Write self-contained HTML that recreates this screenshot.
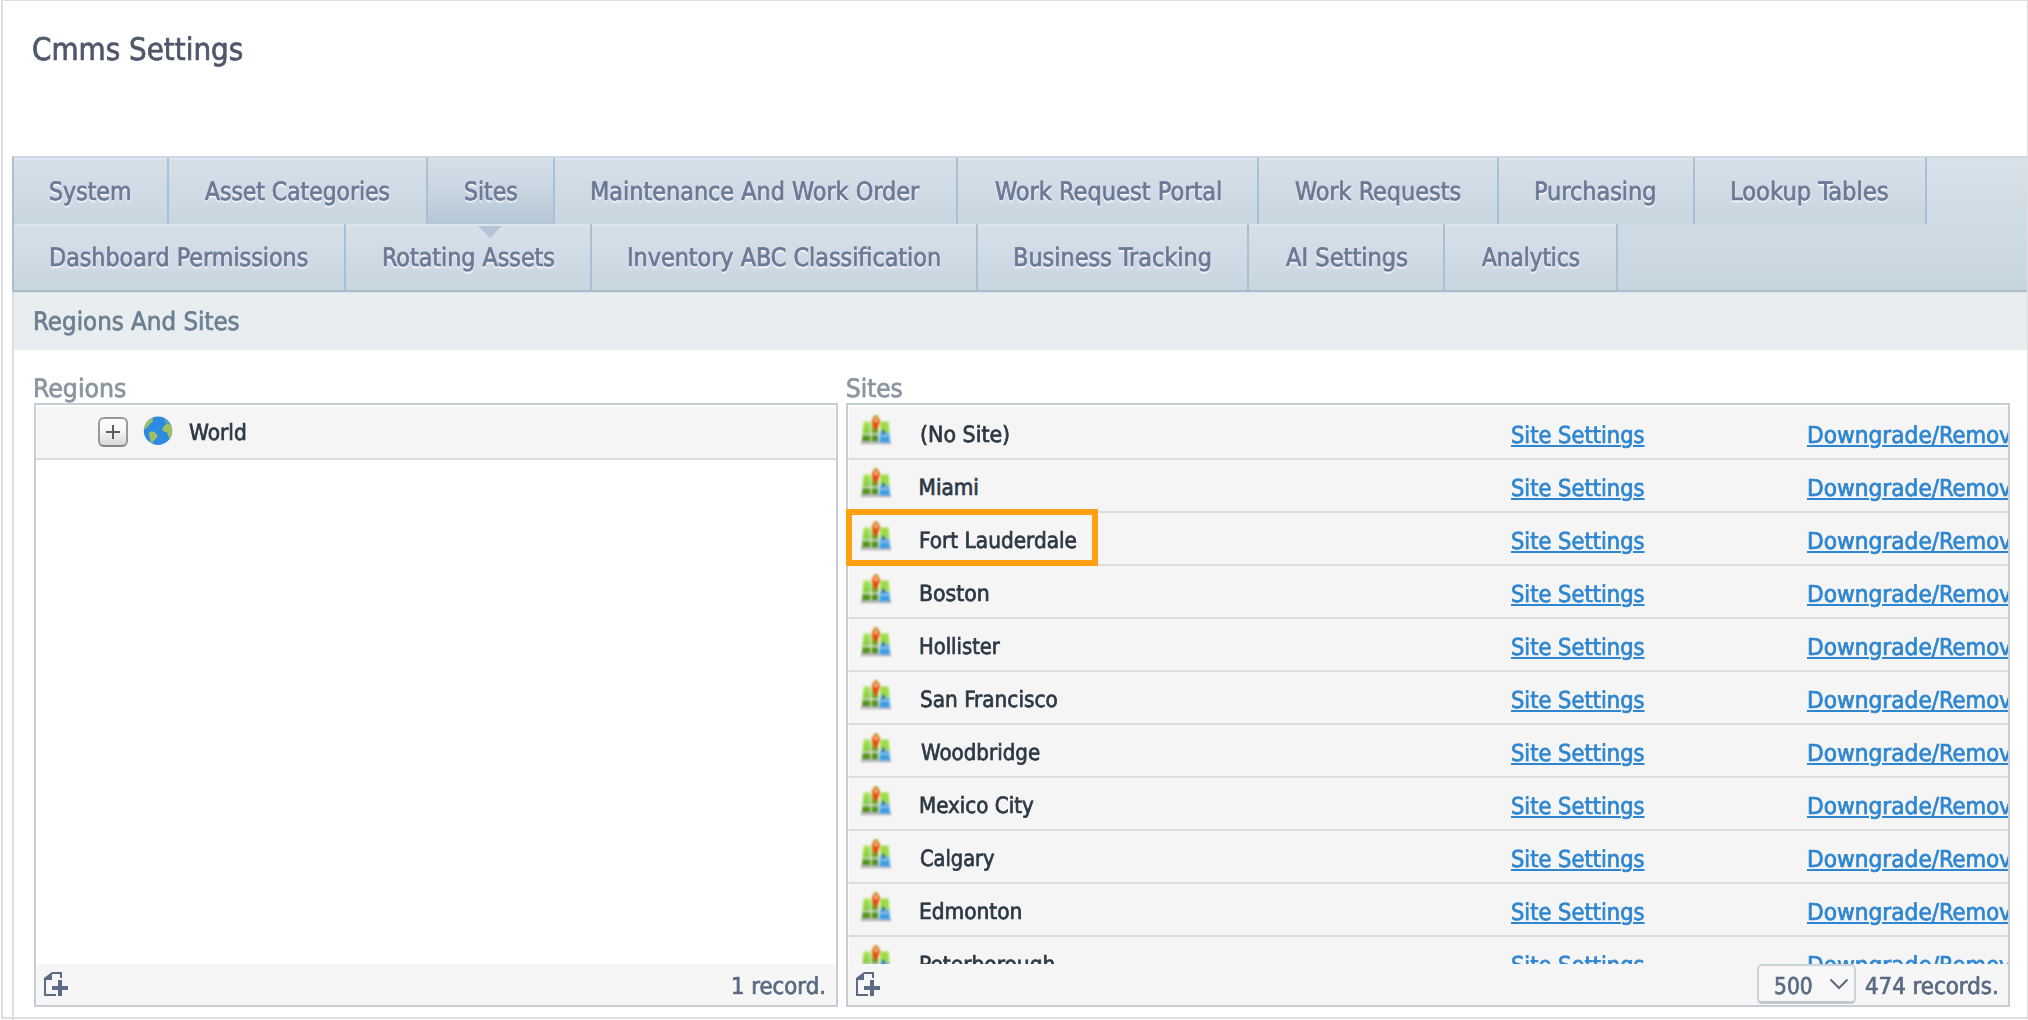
<!DOCTYPE html><html><head><meta charset="utf-8"><title>Cmms Settings</title><style>
html,body{margin:0;padding:0;background:#fff;}
body{width:2028px;height:1020px;overflow:hidden;position:relative;font-family:"DejaVu Sans Condensed","DejaVu Sans","Liberation Sans",sans-serif;font-stretch:condensed;}
.a{position:absolute;}
.t{position:absolute;white-space:nowrap;line-height:1;transform-origin:0 0;text-rendering:geometricPrecision;-webkit-text-stroke:0.7px currentColor;}
#outer{left:1px;top:-1px;width:2024px;height:1016px;border:2px solid #dedede;z-index:5;pointer-events:none;}
#vline{left:12px;top:156px;width:2px;height:900px;background:#dedede;}
#tabs{left:12px;top:156px;width:2013px;height:132px;border-left:2px solid #a9bfd3;border-top:2px solid #ced8e2;border-bottom:2px solid #a9bdce;background:linear-gradient(#d7e1ea,#c7d5df);}
.tab{position:absolute;height:66px;box-sizing:border-box;border-right:2px solid #a9bfd3;background:linear-gradient(#d6e0e9,#c8d6e0);box-shadow:inset 0 2px 0 rgba(255,255,255,.18);}
.tab.sel{background:linear-gradient(#d4dee8 0%,#cad7e2 45%,#b5c6d6 100%);box-shadow:inset 0 2px 0 rgba(255,255,255,.12);}
.tt{color:#6b7896;text-shadow:0 2px 2px #fff,0 1px 1px rgba(255,255,255,.4);}
#tri{left:478px;top:226px;width:0;height:0;border-left:12px solid transparent;border-right:12px solid transparent;border-top:12px solid #b4c5d6;}
#band{left:14px;top:292px;width:2013px;height:57px;background:#e8edf0;border-top:1px solid #dfe1e3;}
.panel{position:absolute;box-sizing:border-box;border:2px solid #c7ccd5;background:#fff;overflow:hidden;}
.row{position:absolute;left:0;right:0;height:51px;background:#f5f5f5;border-bottom:2px solid #dcdcdc;}
.nm{color:#2c3845;}
#psit .row::before{content:"";position:absolute;left:0;top:0;width:1px;height:51px;background:#fff;}
#preg .row::before{content:"";position:absolute;left:0;top:0;width:1px;height:51px;background:#fff;}
#preg .row::after{content:"";position:absolute;right:0;top:0;width:1px;height:51px;background:#fff;}
.lk{color:#2e86d1;text-decoration:underline;text-decoration-thickness:2px;text-underline-offset:2px;}
.foot{position:absolute;left:0;right:0;bottom:0;height:41px;background:#f6f6f6;}
.ft{color:#5a6a83;text-shadow:0 2px 0 #fff;}
</style></head><body>
<div id="outer" class="a"></div>
<div id="vline" class="a"></div>
<div class="t " style="left:31.5px;top:35px;font-size:31.04px;transform:scaleX(0.9971);color:#4f576b;">Cmms Settings</div>
<div id="tabs" class="a">
<div class="tab" style="left:0px;top:0;width:155px"></div>
<div class="tab" style="left:155px;top:0;width:259px"></div>
<div class="tab sel" style="left:414px;top:0;width:127px"></div>
<div class="tab" style="left:541px;top:0;width:403px"></div>
<div class="tab" style="left:944px;top:0;width:301px"></div>
<div class="tab" style="left:1245px;top:0;width:240px"></div>
<div class="tab" style="left:1485px;top:0;width:196px"></div>
<div class="tab" style="left:1681px;top:0;width:232px"></div>
<div class="tab" style="left:0px;top:66px;width:332px"></div>
<div class="tab" style="left:332px;top:66px;width:246px"></div>
<div class="tab" style="left:578px;top:66px;width:386px"></div>
<div class="tab" style="left:964px;top:66px;width:271px"></div>
<div class="tab" style="left:1235px;top:66px;width:196px"></div>
<div class="tab" style="left:1431px;top:66px;width:173px"></div>
</div>
<div class="t tt" style="left:49.0px;top:179px;font-size:25.22px;transform:scaleX(0.9756);">System</div>
<div class="t tt" style="left:205.0px;top:179px;font-size:25.22px;transform:scaleX(0.9660);">Asset Categories</div>
<div class="t tt" style="left:463.9px;top:179px;font-size:25.22px;transform:scaleX(0.9685);">Sites</div>
<div class="t tt" style="left:590.0px;top:179px;font-size:25.22px;transform:scaleX(0.9864);">Maintenance And Work Order</div>
<div class="t tt" style="left:994.5px;top:179px;font-size:25.22px;transform:scaleX(0.9934);">Work Request Portal</div>
<div class="t tt" style="left:1295.0px;top:179px;font-size:25.22px;transform:scaleX(0.9866);">Work Requests</div>
<div class="t tt" style="left:1534.0px;top:179px;font-size:25.22px;transform:scaleX(0.9876);">Purchasing</div>
<div class="t tt" style="left:1729.7px;top:179px;font-size:25.22px;transform:scaleX(1.0016);">Lookup Tables</div>
<div class="t tt" style="left:49.3px;top:245px;font-size:25.22px;transform:scaleX(0.9809);">Dashboard Permissions</div>
<div class="t tt" style="left:381.7px;top:245px;font-size:25.22px;transform:scaleX(0.9805);">Rotating Assets</div>
<div class="t tt" style="left:626.8px;top:245px;font-size:25.22px;transform:scaleX(0.9834);">Inventory ABC Classification</div>
<div class="t tt" style="left:1013.0px;top:245px;font-size:25.22px;transform:scaleX(0.9886);">Business Tracking</div>
<div class="t tt" style="left:1285.5px;top:245px;font-size:25.22px;transform:scaleX(0.9959);">AI Settings</div>
<div class="t tt" style="left:1482.0px;top:245px;font-size:25.22px;transform:scaleX(0.9510);">Analytics</div>
<div id="tri" class="a"></div>
<div id="band" class="a"></div>
<div class="t " style="left:32.8px;top:309px;font-size:25.22px;transform:scaleX(1.0154);color:#6a7f92;">Regions And Sites</div>
<div class="t " style="left:32.7px;top:376px;font-size:25.22px;transform:scaleX(1.0448);color:#8a95a0;">Regions</div>
<div class="t " style="left:845.5px;top:376px;font-size:25.22px;transform:scaleX(1.0241);color:#8a95a0;">Sites</div>
<svg width="0" height="0" style="position:absolute"><defs><linearGradient id="g1" x1="0" y1="0" x2="0" y2="1"><stop offset="0" stop-color="#a9e858"/><stop offset=".55" stop-color="#88cc3c"/><stop offset=".7" stop-color="#5f9f22"/><stop offset="1" stop-color="#4a8a14"/></linearGradient><linearGradient id="g3" x1="0" y1="0" x2="0" y2="1"><stop offset="0" stop-color="#7cbc34"/><stop offset="1" stop-color="#4c8a16"/></linearGradient><linearGradient id="g2" x1="0" y1="0" x2="0" y2="1"><stop offset="0" stop-color="#c0a444"/><stop offset=".17" stop-color="#d49c3a"/><stop offset=".3" stop-color="#e87828"/><stop offset=".55" stop-color="#f04c0c"/><stop offset="1" stop-color="#e43800"/></linearGradient><filter id="bl" x="-10%" y="-10%" width="120%" height="120%"><feGaussianBlur stdDeviation=".9"/></filter></defs></svg>
<div class="panel" id="preg" style="left:34px;top:403px;width:804px;height:604px;">
<div class="row" style="top:2px"></div>
<div class="a" id="plus" style="left:62px;top:12px;width:30px;height:30px;box-sizing:border-box;border:2px solid #999;border-bottom-color:#858585;border-radius:6px;background:linear-gradient(#ffffff,#f4f4f4 50%,#d9d9d9);"><div class="a" style="left:6px;top:12px;width:14px;height:2px;background:#5e5e5e"></div><div class="a" style="left:12px;top:6px;width:2px;height:14px;background:#5e5e5e"></div></div>
<svg class="a" id="globe" style="left:107px;top:11px" width="30" height="30" viewBox="0 0 30 30"><defs><clipPath id="gc"><circle cx="15" cy="14.800" r="14.200"/></clipPath><filter id="bl2" x="-10%" y="-10%" width="120%" height="120%"><feGaussianBlur stdDeviation=".75"/></filter></defs><g filter="url(#bl2)"><circle cx="15" cy="14.800" r="14.200" fill="#2f8ae0"/><g clip-path="url(#gc)" fill="#9dc162"><path d="M0 12.500L2.800 6.800 6.800 2.800 9.500 1.500 10 5.200 6.800 8 4.800 10.700 1.700 13.400z"/><path d="M6.400 15.800L10.700 15.400 14.600 19.300 13.800 21.700 10.700 24.800 9.500 27 7.500 26 7.200 22.500 6 19.300z"/><path d="M19.300 13.400L20.900 9.900 23.200 8 26.400 8 30 12 30 18.500 26 22.500 24.800 18.500 24 16.200 20.500 15.400z"/><path d="M20.500 2.500L25 5.500 26.400 7.600 23 7.800z" opacity=".55"/></g></g></svg>
<div class="t nm" style="left:152.5px;top:17px;font-size:22.31px;transform:scaleX(1.0071);">World</div>
<div class="foot"></div>
<div class="t ft" style="left:695.0px;top:570px;font-size:23.28px;transform:scaleX(1.0167);">1 record.</div>
</div>
<div class="panel" id="psit" style="left:846px;top:403px;width:1164px;height:604px;background:#f5f5f5">
<div class="a" style="left:0;right:0;top:0;height:2px;background:#fff"></div>
<div class="row" style="top:2px;right:0"><svg class="a" style="left:12px;top:7px" width="32" height="32" viewBox="0 0 32 32"><g filter="url(#bl)"><rect x=".5" y="27.300" width="31" height="3" fill="#bdbdbd"/><path d="M3.600 7.600H10.400V27.600H1.900z" fill="url(#g1)"/><rect x="11.600" y="9" width="6.600" height="18.600" fill="url(#g3)"/><path d="M20.300 7.600H28.600L29.400 19.200H20z" fill="#9cdc46"/><path d="M19.600 19H29.400L30.100 28.800H19.500z" fill="#3c9ee4"/><rect x="19.800" y="21" width="10" height="1.400" fill="#bfe0f6" opacity=".7"/><rect x="21.900" y="15.800" width="3.100" height="3.600" fill="#3356b8"/><rect x="2.500" y="19.400" width="16.500" height="1.500" fill="#e4ecd8" opacity=".85"/><path d="M14.200.9H17.600C17.800 2.600 18.200 3.200 19.200 4.200 20 5.200 20.200 6.400 20 7.600 19.400 10.800 17.400 14.200 15.900 17 15.700 17.300 15.500 17.300 15.300 17 13.800 14.200 12.200 10.800 11.800 7.600 11.600 6.400 11.800 5.200 12.600 4.200 13.600 3.200 14 2.600 14.200.9z" fill="url(#g2)"/><rect x="14.800" y="5.400" width="2.200" height="2.200" fill="#f8d0b0"/></g></svg></div>
<div class="t nm" style="left:71.6px;top:19px;font-size:22.31px;transform:scaleX(1.0267);">(No Site)</div>
<a class="t lk" style="left:663.0px;top:19px;font-size:23.28px;transform:scaleX(1.0061);">Site Settings</a>
<a class="t lk" style="left:959.1px;top:19px;font-size:23.28px;transform:scaleX(1.0381);">Downgrade/</a>
<a class="t lk" style="left:1091.0px;top:19px;font-size:23.28px;transform:scaleX(1.0088);">Remove</a>
<div class="row" style="top:55px;right:0"><svg class="a" style="left:12px;top:7px" width="32" height="32" viewBox="0 0 32 32"><g filter="url(#bl)"><rect x=".5" y="27.300" width="31" height="3" fill="#bdbdbd"/><path d="M3.600 7.600H10.400V27.600H1.900z" fill="url(#g1)"/><rect x="11.600" y="9" width="6.600" height="18.600" fill="url(#g3)"/><path d="M20.300 7.600H28.600L29.400 19.200H20z" fill="#9cdc46"/><path d="M19.600 19H29.400L30.100 28.800H19.500z" fill="#3c9ee4"/><rect x="19.800" y="21" width="10" height="1.400" fill="#bfe0f6" opacity=".7"/><rect x="21.900" y="15.800" width="3.100" height="3.600" fill="#3356b8"/><rect x="2.500" y="19.400" width="16.500" height="1.500" fill="#e4ecd8" opacity=".85"/><path d="M14.200.9H17.600C17.800 2.600 18.200 3.200 19.200 4.200 20 5.200 20.200 6.400 20 7.600 19.400 10.800 17.400 14.200 15.900 17 15.700 17.300 15.500 17.300 15.300 17 13.800 14.200 12.200 10.800 11.800 7.600 11.600 6.400 11.800 5.200 12.600 4.200 13.600 3.200 14 2.600 14.200.9z" fill="url(#g2)"/><rect x="14.800" y="5.400" width="2.200" height="2.200" fill="#f8d0b0"/></g></svg></div>
<div class="t nm" style="left:70.6px;top:72px;font-size:22.31px;transform:scaleX(1.0000);">Miami</div>
<a class="t lk" style="left:663.0px;top:72px;font-size:23.28px;transform:scaleX(1.0061);">Site Settings</a>
<a class="t lk" style="left:959.1px;top:72px;font-size:23.28px;transform:scaleX(1.0381);">Downgrade/</a>
<a class="t lk" style="left:1091.0px;top:72px;font-size:23.28px;transform:scaleX(1.0088);">Remove</a>
<div class="row" style="top:108px;right:0"><svg class="a" style="left:12px;top:7px" width="32" height="32" viewBox="0 0 32 32"><g filter="url(#bl)"><rect x=".5" y="27.300" width="31" height="3" fill="#bdbdbd"/><path d="M3.600 7.600H10.400V27.600H1.900z" fill="url(#g1)"/><rect x="11.600" y="9" width="6.600" height="18.600" fill="url(#g3)"/><path d="M20.300 7.600H28.600L29.400 19.200H20z" fill="#9cdc46"/><path d="M19.600 19H29.400L30.100 28.800H19.500z" fill="#3c9ee4"/><rect x="19.800" y="21" width="10" height="1.400" fill="#bfe0f6" opacity=".7"/><rect x="21.900" y="15.800" width="3.100" height="3.600" fill="#3356b8"/><rect x="2.500" y="19.400" width="16.500" height="1.500" fill="#e4ecd8" opacity=".85"/><path d="M14.200.9H17.600C17.800 2.600 18.200 3.200 19.200 4.200 20 5.200 20.200 6.400 20 7.600 19.400 10.800 17.400 14.200 15.900 17 15.700 17.300 15.500 17.300 15.300 17 13.800 14.200 12.200 10.800 11.800 7.600 11.600 6.400 11.800 5.200 12.600 4.200 13.600 3.200 14 2.600 14.200.9z" fill="url(#g2)"/><rect x="14.800" y="5.400" width="2.200" height="2.200" fill="#f8d0b0"/></g></svg></div>
<div class="t nm" style="left:70.6px;top:125px;font-size:22.31px;transform:scaleX(1.0026);">Fort Lauderdale</div>
<a class="t lk" style="left:663.0px;top:125px;font-size:23.28px;transform:scaleX(1.0061);">Site Settings</a>
<a class="t lk" style="left:959.1px;top:125px;font-size:23.28px;transform:scaleX(1.0381);">Downgrade/</a>
<a class="t lk" style="left:1091.0px;top:125px;font-size:23.28px;transform:scaleX(1.0088);">Remove</a>
<div class="row" style="top:161px;right:0"><svg class="a" style="left:12px;top:7px" width="32" height="32" viewBox="0 0 32 32"><g filter="url(#bl)"><rect x=".5" y="27.300" width="31" height="3" fill="#bdbdbd"/><path d="M3.600 7.600H10.400V27.600H1.900z" fill="url(#g1)"/><rect x="11.600" y="9" width="6.600" height="18.600" fill="url(#g3)"/><path d="M20.300 7.600H28.600L29.400 19.200H20z" fill="#9cdc46"/><path d="M19.600 19H29.400L30.100 28.800H19.500z" fill="#3c9ee4"/><rect x="19.800" y="21" width="10" height="1.400" fill="#bfe0f6" opacity=".7"/><rect x="21.900" y="15.800" width="3.100" height="3.600" fill="#3356b8"/><rect x="2.500" y="19.400" width="16.500" height="1.500" fill="#e4ecd8" opacity=".85"/><path d="M14.200.9H17.600C17.800 2.600 18.200 3.200 19.200 4.200 20 5.200 20.200 6.400 20 7.600 19.400 10.800 17.400 14.200 15.900 17 15.700 17.300 15.500 17.300 15.300 17 13.800 14.200 12.200 10.800 11.800 7.600 11.600 6.400 11.800 5.200 12.600 4.200 13.600 3.200 14 2.600 14.200.9z" fill="url(#g2)"/><rect x="14.800" y="5.400" width="2.200" height="2.200" fill="#f8d0b0"/></g></svg></div>
<div class="t nm" style="left:70.6px;top:178px;font-size:22.31px;transform:scaleX(1.0212);">Boston</div>
<a class="t lk" style="left:663.0px;top:178px;font-size:23.28px;transform:scaleX(1.0061);">Site Settings</a>
<a class="t lk" style="left:959.1px;top:178px;font-size:23.28px;transform:scaleX(1.0381);">Downgrade/</a>
<a class="t lk" style="left:1091.0px;top:178px;font-size:23.28px;transform:scaleX(1.0088);">Remove</a>
<div class="row" style="top:214px;right:0"><svg class="a" style="left:12px;top:7px" width="32" height="32" viewBox="0 0 32 32"><g filter="url(#bl)"><rect x=".5" y="27.300" width="31" height="3" fill="#bdbdbd"/><path d="M3.600 7.600H10.400V27.600H1.900z" fill="url(#g1)"/><rect x="11.600" y="9" width="6.600" height="18.600" fill="url(#g3)"/><path d="M20.300 7.600H28.600L29.400 19.200H20z" fill="#9cdc46"/><path d="M19.600 19H29.400L30.100 28.800H19.500z" fill="#3c9ee4"/><rect x="19.800" y="21" width="10" height="1.400" fill="#bfe0f6" opacity=".7"/><rect x="21.900" y="15.800" width="3.100" height="3.600" fill="#3356b8"/><rect x="2.500" y="19.400" width="16.500" height="1.500" fill="#e4ecd8" opacity=".85"/><path d="M14.200.9H17.600C17.800 2.600 18.200 3.200 19.200 4.200 20 5.200 20.200 6.400 20 7.600 19.400 10.800 17.400 14.200 15.900 17 15.700 17.300 15.500 17.300 15.300 17 13.800 14.200 12.200 10.800 11.800 7.600 11.600 6.400 11.800 5.200 12.600 4.200 13.600 3.200 14 2.600 14.200.9z" fill="url(#g2)"/><rect x="14.800" y="5.400" width="2.200" height="2.200" fill="#f8d0b0"/></g></svg></div>
<div class="t nm" style="left:70.7px;top:231px;font-size:22.31px;transform:scaleX(0.9744);">Hollister</div>
<a class="t lk" style="left:663.0px;top:231px;font-size:23.28px;transform:scaleX(1.0061);">Site Settings</a>
<a class="t lk" style="left:959.1px;top:231px;font-size:23.28px;transform:scaleX(1.0381);">Downgrade/</a>
<a class="t lk" style="left:1091.0px;top:231px;font-size:23.28px;transform:scaleX(1.0088);">Remove</a>
<div class="row" style="top:267px;right:0"><svg class="a" style="left:12px;top:7px" width="32" height="32" viewBox="0 0 32 32"><g filter="url(#bl)"><rect x=".5" y="27.300" width="31" height="3" fill="#bdbdbd"/><path d="M3.600 7.600H10.400V27.600H1.900z" fill="url(#g1)"/><rect x="11.600" y="9" width="6.600" height="18.600" fill="url(#g3)"/><path d="M20.300 7.600H28.600L29.400 19.200H20z" fill="#9cdc46"/><path d="M19.600 19H29.400L30.100 28.800H19.500z" fill="#3c9ee4"/><rect x="19.800" y="21" width="10" height="1.400" fill="#bfe0f6" opacity=".7"/><rect x="21.900" y="15.800" width="3.100" height="3.600" fill="#3356b8"/><rect x="2.500" y="19.400" width="16.500" height="1.500" fill="#e4ecd8" opacity=".85"/><path d="M14.200.9H17.600C17.800 2.600 18.200 3.200 19.200 4.200 20 5.200 20.200 6.400 20 7.600 19.400 10.800 17.400 14.200 15.900 17 15.700 17.300 15.500 17.300 15.300 17 13.800 14.200 12.200 10.800 11.800 7.600 11.600 6.400 11.800 5.200 12.600 4.200 13.600 3.200 14 2.600 14.200.9z" fill="url(#g2)"/><rect x="14.800" y="5.400" width="2.200" height="2.200" fill="#f8d0b0"/></g></svg></div>
<div class="t nm" style="left:71.6px;top:284px;font-size:22.31px;transform:scaleX(1.0007);">San Francisco</div>
<a class="t lk" style="left:663.0px;top:284px;font-size:23.28px;transform:scaleX(1.0061);">Site Settings</a>
<a class="t lk" style="left:959.1px;top:284px;font-size:23.28px;transform:scaleX(1.0381);">Downgrade/</a>
<a class="t lk" style="left:1091.0px;top:284px;font-size:23.28px;transform:scaleX(1.0088);">Remove</a>
<div class="row" style="top:320px;right:0"><svg class="a" style="left:12px;top:7px" width="32" height="32" viewBox="0 0 32 32"><g filter="url(#bl)"><rect x=".5" y="27.300" width="31" height="3" fill="#bdbdbd"/><path d="M3.600 7.600H10.400V27.600H1.900z" fill="url(#g1)"/><rect x="11.600" y="9" width="6.600" height="18.600" fill="url(#g3)"/><path d="M20.300 7.600H28.600L29.400 19.200H20z" fill="#9cdc46"/><path d="M19.600 19H29.400L30.100 28.800H19.500z" fill="#3c9ee4"/><rect x="19.800" y="21" width="10" height="1.400" fill="#bfe0f6" opacity=".7"/><rect x="21.900" y="15.800" width="3.100" height="3.600" fill="#3356b8"/><rect x="2.500" y="19.400" width="16.500" height="1.500" fill="#e4ecd8" opacity=".85"/><path d="M14.200.9H17.600C17.800 2.600 18.200 3.200 19.200 4.200 20 5.200 20.200 6.400 20 7.600 19.400 10.800 17.400 14.200 15.900 17 15.700 17.300 15.500 17.300 15.300 17 13.800 14.200 12.200 10.800 11.800 7.600 11.600 6.400 11.800 5.200 12.600 4.200 13.600 3.200 14 2.600 14.200.9z" fill="url(#g2)"/><rect x="14.800" y="5.400" width="2.200" height="2.200" fill="#f8d0b0"/></g></svg></div>
<div class="t nm" style="left:72.6px;top:337px;font-size:22.31px;transform:scaleX(0.9917);">Woodbridge</div>
<a class="t lk" style="left:663.0px;top:337px;font-size:23.28px;transform:scaleX(1.0061);">Site Settings</a>
<a class="t lk" style="left:959.1px;top:337px;font-size:23.28px;transform:scaleX(1.0381);">Downgrade/</a>
<a class="t lk" style="left:1091.0px;top:337px;font-size:23.28px;transform:scaleX(1.0088);">Remove</a>
<div class="row" style="top:373px;right:0"><svg class="a" style="left:12px;top:7px" width="32" height="32" viewBox="0 0 32 32"><g filter="url(#bl)"><rect x=".5" y="27.300" width="31" height="3" fill="#bdbdbd"/><path d="M3.600 7.600H10.400V27.600H1.900z" fill="url(#g1)"/><rect x="11.600" y="9" width="6.600" height="18.600" fill="url(#g3)"/><path d="M20.300 7.600H28.600L29.400 19.200H20z" fill="#9cdc46"/><path d="M19.600 19H29.400L30.100 28.800H19.500z" fill="#3c9ee4"/><rect x="19.800" y="21" width="10" height="1.400" fill="#bfe0f6" opacity=".7"/><rect x="21.900" y="15.800" width="3.100" height="3.600" fill="#3356b8"/><rect x="2.500" y="19.400" width="16.500" height="1.500" fill="#e4ecd8" opacity=".85"/><path d="M14.200.9H17.600C17.800 2.600 18.200 3.200 19.200 4.200 20 5.200 20.200 6.400 20 7.600 19.400 10.800 17.400 14.200 15.900 17 15.700 17.300 15.500 17.300 15.300 17 13.800 14.200 12.200 10.800 11.800 7.600 11.600 6.400 11.800 5.200 12.600 4.200 13.600 3.200 14 2.600 14.200.9z" fill="url(#g2)"/><rect x="14.800" y="5.400" width="2.200" height="2.200" fill="#f8d0b0"/></g></svg></div>
<div class="t nm" style="left:70.6px;top:390px;font-size:22.31px;transform:scaleX(0.9920);">Mexico City</div>
<a class="t lk" style="left:663.0px;top:390px;font-size:23.28px;transform:scaleX(1.0061);">Site Settings</a>
<a class="t lk" style="left:959.1px;top:390px;font-size:23.28px;transform:scaleX(1.0381);">Downgrade/</a>
<a class="t lk" style="left:1091.0px;top:390px;font-size:23.28px;transform:scaleX(1.0088);">Remove</a>
<div class="row" style="top:426px;right:0"><svg class="a" style="left:12px;top:7px" width="32" height="32" viewBox="0 0 32 32"><g filter="url(#bl)"><rect x=".5" y="27.300" width="31" height="3" fill="#bdbdbd"/><path d="M3.600 7.600H10.400V27.600H1.900z" fill="url(#g1)"/><rect x="11.600" y="9" width="6.600" height="18.600" fill="url(#g3)"/><path d="M20.300 7.600H28.600L29.400 19.200H20z" fill="#9cdc46"/><path d="M19.600 19H29.400L30.100 28.800H19.500z" fill="#3c9ee4"/><rect x="19.800" y="21" width="10" height="1.400" fill="#bfe0f6" opacity=".7"/><rect x="21.900" y="15.800" width="3.100" height="3.600" fill="#3356b8"/><rect x="2.500" y="19.400" width="16.500" height="1.500" fill="#e4ecd8" opacity=".85"/><path d="M14.200.9H17.600C17.800 2.600 18.200 3.200 19.200 4.200 20 5.200 20.200 6.400 20 7.600 19.400 10.800 17.400 14.200 15.900 17 15.700 17.300 15.500 17.300 15.300 17 13.800 14.200 12.200 10.800 11.800 7.600 11.600 6.400 11.800 5.200 12.600 4.200 13.600 3.200 14 2.600 14.200.9z" fill="url(#g2)"/><rect x="14.800" y="5.400" width="2.200" height="2.200" fill="#f8d0b0"/></g></svg></div>
<div class="t nm" style="left:71.6px;top:443px;font-size:22.31px;transform:scaleX(0.9684);">Calgary</div>
<a class="t lk" style="left:663.0px;top:443px;font-size:23.28px;transform:scaleX(1.0061);">Site Settings</a>
<a class="t lk" style="left:959.1px;top:443px;font-size:23.28px;transform:scaleX(1.0381);">Downgrade/</a>
<a class="t lk" style="left:1091.0px;top:443px;font-size:23.28px;transform:scaleX(1.0088);">Remove</a>
<div class="row" style="top:479px;right:0"><svg class="a" style="left:12px;top:7px" width="32" height="32" viewBox="0 0 32 32"><g filter="url(#bl)"><rect x=".5" y="27.300" width="31" height="3" fill="#bdbdbd"/><path d="M3.600 7.600H10.400V27.600H1.900z" fill="url(#g1)"/><rect x="11.600" y="9" width="6.600" height="18.600" fill="url(#g3)"/><path d="M20.300 7.600H28.600L29.400 19.200H20z" fill="#9cdc46"/><path d="M19.600 19H29.400L30.100 28.800H19.500z" fill="#3c9ee4"/><rect x="19.800" y="21" width="10" height="1.400" fill="#bfe0f6" opacity=".7"/><rect x="21.900" y="15.800" width="3.100" height="3.600" fill="#3356b8"/><rect x="2.500" y="19.400" width="16.500" height="1.500" fill="#e4ecd8" opacity=".85"/><path d="M14.200.9H17.600C17.800 2.600 18.200 3.200 19.200 4.200 20 5.200 20.200 6.400 20 7.600 19.400 10.800 17.400 14.200 15.900 17 15.700 17.300 15.500 17.300 15.300 17 13.800 14.200 12.200 10.800 11.800 7.600 11.600 6.400 11.800 5.200 12.600 4.200 13.600 3.200 14 2.600 14.200.9z" fill="url(#g2)"/><rect x="14.800" y="5.400" width="2.200" height="2.200" fill="#f8d0b0"/></g></svg></div>
<div class="t nm" style="left:70.6px;top:496px;font-size:22.31px;transform:scaleX(1.0060);">Edmonton</div>
<a class="t lk" style="left:663.0px;top:496px;font-size:23.28px;transform:scaleX(1.0061);">Site Settings</a>
<a class="t lk" style="left:959.1px;top:496px;font-size:23.28px;transform:scaleX(1.0381);">Downgrade/</a>
<a class="t lk" style="left:1091.0px;top:496px;font-size:23.28px;transform:scaleX(1.0088);">Remove</a>
<div class="row" style="top:532px;right:0"><svg class="a" style="left:12px;top:7px" width="32" height="32" viewBox="0 0 32 32"><g filter="url(#bl)"><rect x=".5" y="27.300" width="31" height="3" fill="#bdbdbd"/><path d="M3.600 7.600H10.400V27.600H1.900z" fill="url(#g1)"/><rect x="11.600" y="9" width="6.600" height="18.600" fill="url(#g3)"/><path d="M20.300 7.600H28.600L29.400 19.200H20z" fill="#9cdc46"/><path d="M19.600 19H29.400L30.100 28.800H19.500z" fill="#3c9ee4"/><rect x="19.800" y="21" width="10" height="1.400" fill="#bfe0f6" opacity=".7"/><rect x="21.900" y="15.800" width="3.100" height="3.600" fill="#3356b8"/><rect x="2.500" y="19.400" width="16.500" height="1.500" fill="#e4ecd8" opacity=".85"/><path d="M14.200.9H17.600C17.800 2.600 18.200 3.200 19.200 4.200 20 5.200 20.200 6.400 20 7.600 19.400 10.800 17.400 14.200 15.900 17 15.700 17.300 15.500 17.300 15.300 17 13.800 14.200 12.200 10.800 11.800 7.600 11.600 6.400 11.800 5.200 12.600 4.200 13.600 3.200 14 2.600 14.200.9z" fill="url(#g2)"/><rect x="14.800" y="5.400" width="2.200" height="2.200" fill="#f8d0b0"/></g></svg></div>
<div class="t nm" style="left:70.6px;top:549px;font-size:22.31px;transform:scaleX(1.0076);">Peterborough</div>
<a class="t lk" style="left:663.0px;top:549px;font-size:23.28px;transform:scaleX(1.0061);">Site Settings</a>
<a class="t lk" style="left:959.1px;top:549px;font-size:23.28px;transform:scaleX(1.0381);">Downgrade/</a>
<a class="t lk" style="left:1091.0px;top:549px;font-size:23.28px;transform:scaleX(1.0088);">Remove</a>
<div class="foot"></div>
<div class="a" id="sel" style="left:909px;top:559px;width:99px;height:40px;box-sizing:border-box;border:2px solid #cdd2d9;border-bottom:3px solid #c3c8cf;border-radius:5px;background:#f7f7f7"></div>
<svg class="a" style="left:981px;top:573px" width="20" height="12" viewBox="0 0 20 12"><path d="M1.500 1.500L10 10 18.500 1.500" fill="none" stroke="#5a6a83" stroke-width="2"/></svg>
<div class="t ft" style="left:926.2px;top:570px;font-size:23.28px;transform:scaleX(0.9684);text-shadow:none;">500</div>
<div class="t ft" style="left:1017.3px;top:570px;font-size:23.28px;transform:scaleX(1.0211);">474 records.</div>
</div>
<svg class="a" style="left:44px;top:972px" width="24" height="24" viewBox="0 0 24 24"><g fill="#5b6b86"><path d="M8 0h10v6h-2v-4h-8z"/><path d="M0 6L8 0v8H2v14h10v2H0z"/><rect x="14" y="8" width="4" height="16"/><rect x="8" y="14" width="16" height="4"/></g></svg>
<svg class="a" style="left:856px;top:972px" width="24" height="24" viewBox="0 0 24 24"><g fill="#5b6b86"><path d="M8 0h10v6h-2v-4h-8z"/><path d="M0 6L8 0v8H2v14h10v2H0z"/><rect x="14" y="8" width="4" height="16"/><rect x="8" y="14" width="16" height="4"/></g></svg>
<div class="a" id="hl" style="left:846px;top:509px;width:252px;height:57px;box-sizing:border-box;border:6px solid #ff9f12;"></div>
</body></html>
